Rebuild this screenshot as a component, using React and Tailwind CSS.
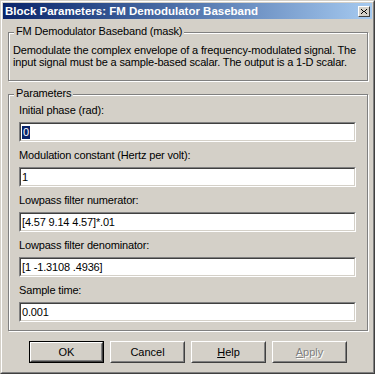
import React from 'react';

const font = { fontFamily: '"Liberation Sans", Arial, sans-serif' };

const fields = [
    { label: 'Initial phase (rad):', value: '0', selected: true },
    { label: 'Modulation constant (Hertz per volt):', value: '1' },
    { label: 'Lowpass filter numerator:', value: '[4.57 9.14 4.57]*.01' },
    { label: 'Lowpass filter denominator:', value: '[1 -1.3108 .4936]' },
    { label: 'Sample time:', value: '0.001' },
];

const GroupBox = ({ title, className, children }) => (
    <div
        className={`relative border border-[#808080] shadow-[inset_1px_1px_0_#fff,1px_1px_0_#fff] ${className}`}
    >
        <span className="absolute -top-[8px] left-[5px] px-[2px] bg-[#d4d0c8] text-[11px] leading-[13px] tracking-[-0.16px] text-black">
            {title}
        </span>
        {children}
    </div>
);

const Field = ({ label, value, selected }) => (
    <div className="mb-[7px]">
        <div className="h-[13px] leading-[13px] mb-[5px] text-[11px] tracking-[-0.16px] text-black whitespace-nowrap">{label}</div>
        <div className="h-[20px] w-[337px] bg-white border border-t-[#808080] border-l-[#808080] border-r-white border-b-white">
            <div className="h-full border border-t-[#404040] border-l-[#404040] border-r-[#d4d0c8] border-b-[#d4d0c8] pl-[1px] flex items-center text-[11px] tracking-[-0.16px] text-black">
                {selected ? (
                    <span className="bg-[#0a246a] text-white leading-[13px] px-[1px]">{value}</span>
                ) : (
                    <span className="leading-[13px]">{value}</span>
                )}
            </div>
        </div>
    </div>
);

const Button = ({ children, isDefault, disabled }) => (
    <div className={`w-[75px] h-[22px] ${isDefault ? 'border border-black' : ''}`}>
        <div className="h-full border border-t-white border-l-white border-r-[#404040] border-b-[#404040]">
            <div className="h-full flex items-center justify-center border border-t-[#d4d0c8] border-l-[#d4d0c8] border-r-[#808080] border-b-[#808080] text-[11px]">
                {disabled ? (
                    <span className="text-[#808080] [text-shadow:1px_1px_0_#fff]">{children}</span>
                ) : (
                    <span className="text-black">{children}</span>
                )}
            </div>
        </div>
    </div>
);

export default function App() {
    return (
        <div
            style={font}
            className="w-[375px] h-[374px] bg-[#d4d0c8] border border-t-[#d4d0c8] border-l-[#d4d0c8] border-r-[#404040] border-b-[#404040]"
        >
            <div className="h-full border border-t-white border-l-white border-r-[#808080] border-b-[#808080] p-[1px] flex flex-col">
                {/* title bar */}
                <div className="h-[16px] flex items-center justify-between pl-[2px] bg-gradient-to-r from-[#0a246a] to-[#a6caf0]">
                    <span className="text-white font-bold text-[11.5px] leading-[16px] whitespace-nowrap">
                        Block Parameters: FM Demodulator Baseband
                    </span>
                    <div className="w-[12px] h-[11px] mr-[2px] bg-[#d4d0c8] border border-t-white border-l-white border-r-[#404040] border-b-[#404040] flex items-center justify-center">
                        <svg width="6" height="5" viewBox="0 0 6 5" shapeRendering="crispEdges">
                            <path d="M0 0h1v1H0zM5 0h1v1H5zM1 1h1v1H1zM4 1h1v1H4zM2 2h2v1H2zM1 3h1v1H1zM4 3h1v1H4zM0 4h1v1H0zM5 4h1v1H5z" fill="#000" />
                        </svg>
                    </div>
                </div>

                <GroupBox title="FM Demodulator Baseband (mask)" className="mt-[13px] ml-[5px] mr-[4px] h-[49px] pt-[11px] pl-[4px]">
                    <p className="text-[11px] leading-[12px] tracking-[-0.16px] text-black">
                        Demodulate the complex envelope of a frequency-modulated signal. The
                        <br />
                        input signal must be a sample-based scalar. The output is a 1-D scalar.
                    </p>
                </GroupBox>

                <GroupBox title="Parameters" className="mt-[13px] ml-[5px] mr-[4px] h-[237px] pt-[9px] px-[10px]">
                    {fields.map((f) => (
                        <Field key={f.label} {...f} />
                    ))}
                </GroupBox>

                <div className="mt-[10px] ml-[26px] flex gap-[6px]">
                    <Button isDefault>OK</Button>
                    <Button>Cancel</Button>
                    <Button>
                        <span className="underline">H</span>elp
                    </Button>
                    <Button disabled>
                        <span className="underline">A</span>pply
                    </Button>
                </div>
            </div>
        </div>
    );
}
